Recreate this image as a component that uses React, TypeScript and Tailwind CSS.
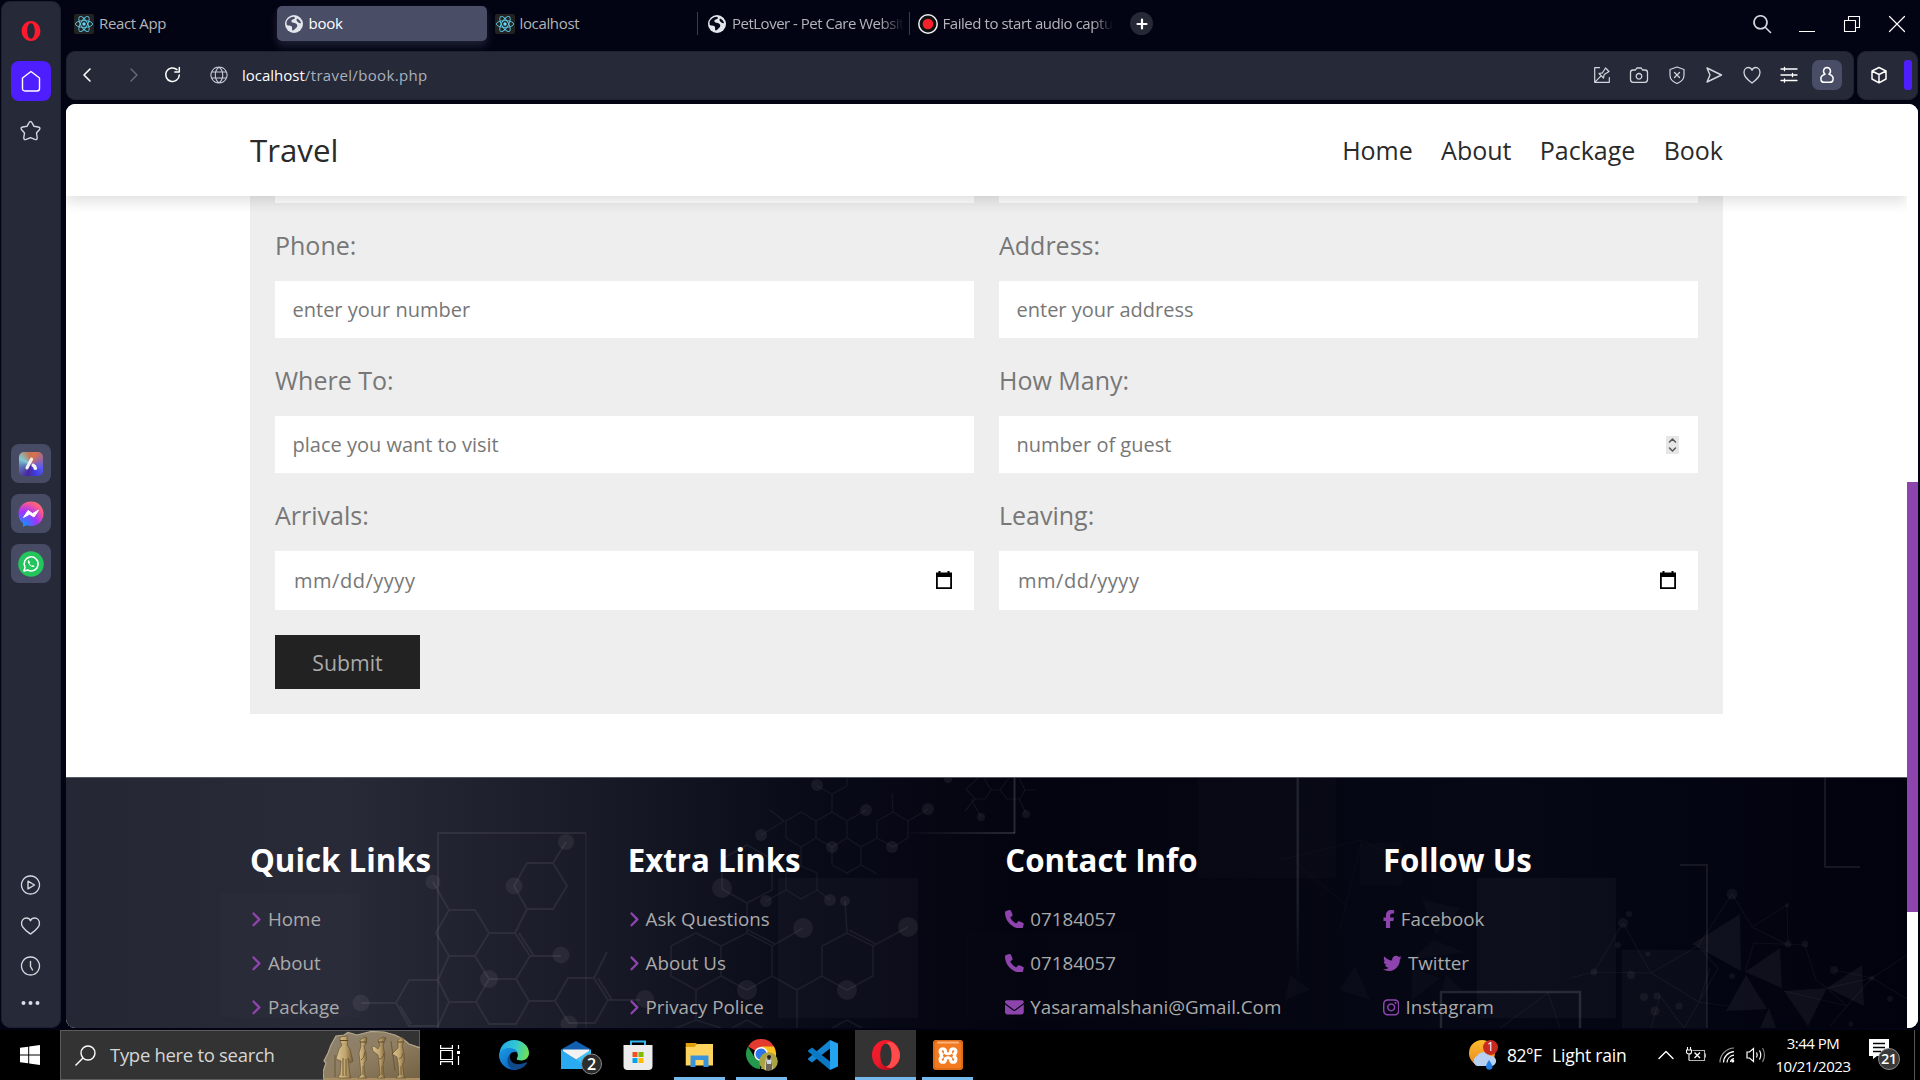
import React from "react";
import { FaAngleRight, FaPhone, FaEnvelope, FaFacebookF, FaTwitter, FaInstagram } from "react-icons/fa6";

const ui = "font-['Open_Sans','Noto_Sans',sans-serif]";

function ReactIcon() {
  return (
    <svg width="20" height="20" viewBox="0 0 20 20" className="shrink-0">
      <rect width="20" height="20" rx="2" fill="#222222" />
      <g fill="none" stroke="#5fc9e6" strokeWidth="0.9">
        <ellipse cx="10" cy="10" rx="8.6" ry="3.4" />
        <ellipse cx="10" cy="10" rx="8.6" ry="3.4" transform="rotate(60 10 10)" />
        <ellipse cx="10" cy="10" rx="8.6" ry="3.4" transform="rotate(120 10 10)" />
      </g>
      <circle cx="10" cy="10" r="1.7" fill="#61dafb" />
    </svg>
  );
}

function GlobeFav({ dark }: { dark: string }) {
  return (
    <svg width="18" height="18" viewBox="0 0 18 18" className="shrink-0">
      <circle cx="9" cy="9" r="9" fill="#e3e6ea" />
      <path d="M1.500 7C2.500 4 5 2 8.500 1.700C10 2 10.500 3.200 9 4C7 4.500 6 5.300 6.500 6.700C7.200 8 9.500 7.500 11.200 8.700C13 10 12.500 12 10.700 13.200C9.500 14.300 8.500 15.800 7.300 15.300C6.600 14 7.800 12.500 6.500 11.300C5 10.500 3 11 1.700 9.800Z" fill={dark} />
      <path d="M12 3.500C14 4.300 15.500 6 16 8C15 8.500 13.500 8 12.500 6.800C11.600 5.600 11 4.300 12 3.500Z" fill={dark} />
    </svg>
  );
}

function Stroke({ w, h, d, sw = 1.4, color = "#d4d6de" }: { w: number; h: number; d: string; sw?: number; color?: string }) {
  return (
    <svg width={w} height={h} viewBox={`0 0 ${w} ${h}`} fill="none" stroke={color} strokeWidth={sw} strokeLinejoin="round" strokeLinecap="round" className="shrink-0">
      <path d={d} />
    </svg>
  );
}

function OperaMark({ size, plain }: { size: number; plain?: boolean }) {
  return (
    <svg width={size} height={size} viewBox="0 0 30 30" className="shrink-0">
      <defs>
        <linearGradient id={plain ? "opA" : "opB"} x1="0" y1="0" x2={plain ? "0" : "1"} y2="1">
          <stop offset="0" stopColor="#ff1b2d" />
          <stop offset="0.5" stopColor={plain ? "#ff1b2d" : "#e81a2a"} />
          <stop offset="1" stopColor={plain ? "#ff1b2d" : "#a70014"} />
        </linearGradient>
      </defs>
      <path fillRule="evenodd" fill={plain ? "url(#opA)" : "url(#opB)"} d="M15 0C23 0 29 6.700 29 15S23 30 15 30S1 23.300 1 15S7 0 15 0ZM15 3.500C11.500 3.500 9.300 8.500 9.300 15S11.500 26.500 15 26.500S20.700 21.500 20.700 15S18.500 3.500 15 3.500Z" />
      {!plain && <path fill="#ff4b4b" d="M15 3.500C17 1.500 21 1.500 23.500 4C27 7 29 11 29 15C29 20 27 23.500 23.500 26.200C21 28.500 17 28.500 15 26.500C18.500 26.500 20.700 21.500 20.700 15S18.500 3.500 15 3.500Z" />}
    </svg>
  );
}

const HEART = "M9 17C5 14 1 11 1 6.500C1 3.500 3 1.500 5.200 1.500C7 1.500 8.400 2.700 9 4.300C9.600 2.700 11 1.500 12.800 1.500C15 1.500 17 3.500 17 6.500C17 11 13 14 9 17Z";

function Sidebar() {
  return (
    <aside className="flex w-[59.5px] ml-px mt-px h-[1027px] flex-col items-center rounded-[9px] bg-[#262938] border border-[#1d202e]">
      <div className="mt-[19px] h-5"><OperaMark size={20} plain /></div>
      <div className="mt-5 flex size-10 items-center justify-center rounded-lg bg-[#4f1eff]">
        <Stroke w={20} h={22} d="M10 1.500L18.500 8V18.500Q18.500 21 16 21H4Q1.500 21 1.500 18.500V8Z" color="#fff" />
      </div>
      <div className="mt-[19px] -translate-x-[0.500px]">
        <Stroke w={22} h={21} d="M11 1.500Q12 1.500 12.600 2.800L14.500 6.300L18.700 7Q21.500 7.700 19.800 9.800L17 13L17.700 17.500Q17.800 20.300 15.300 19.400L11 17.600L6.700 19.400Q4.200 20.300 4.300 17.500L5 13L2.200 9.800Q0.500 7.700 3.300 7L7.500 6.300L9.400 2.800Q10 1.500 11 1.500Z" />
      </div>
      <div className="mt-[303px] flex flex-col gap-[11px]">
        <div className="flex h-[39px] w-10 items-center justify-center rounded-lg bg-[#484b64]">
          <div className="flex size-6 items-center justify-center rounded-[5px] bg-[conic-gradient(from_20deg,#d9734a,#5a5bf0_90deg,#3e3fe0_130deg,#4a259c_180deg,#5f7fb8_240deg,#7fcad4_275deg,#c77350_330deg,#d9734a)]">
            <svg width="16" height="16" viewBox="0 0 16 16" fill="none" stroke="#f4f0f0" strokeWidth="3.200" strokeLinecap="round"><path d="M8.500 3.200L4 11.800" /><path d="M10.200 9.300Q12 10.300 12.300 12.200" strokeWidth="3.600" /></svg>
          </div>
        </div>
        <div className="flex h-[39px] w-10 items-center justify-center rounded-lg bg-[#484b64]">
          <svg width="26" height="26" viewBox="0 0 26 26">
            <defs><radialGradient id="msg" cx="0.2" cy="0.95" r="1.100"><stop offset="0" stopColor="#0a95ff" /><stop offset="0.5" stopColor="#a033ff" /><stop offset="0.85" stopColor="#ff5c87" /><stop offset="1" stopColor="#ff7061" /></radialGradient></defs>
            <path d="M13 0.500C20 0.500 25.500 5.800 25.500 12.700S20 25 13 25C11.500 25 10 24.800 8.800 24.300L5 25.800V22.300C2 20 0.500 16.700 0.500 12.700C0.500 5.800 6 0.500 13 0.500Z" fill="url(#msg)" />
            <path d="M5.500 16.500L10 9.500L14.500 12.500L20.500 9.200L16 16L11.500 13.200Z" fill="#fff" stroke="#fff" strokeLinejoin="round" />
          </svg>
        </div>
        <div className="flex h-[39px] w-10 items-center justify-center rounded-lg bg-[#484b64]">
          <svg width="26" height="26" viewBox="0 0 26 26">
            <circle cx="13" cy="13" r="12.800" fill="#25c55d" />
            <path d="M6 20L7 16.300A7 7 0 1 1 9.700 19Z" fill="none" stroke="#fff" strokeWidth="1.500" strokeLinejoin="round" />
            <path d="M10.300 9.300C9.300 10.500 10 12.500 11.700 14.200S15.700 16.700 16.600 15.300L14.900 14L13.900 14.800C12.800 14.300 11.800 13.300 11.400 12.300L12 11.400L11.200 9.400Z" fill="#fff" />
          </svg>
        </div>
      </div>
      <div className="mt-[292px] flex -translate-x-[0.500px] flex-col items-center">
        <Stroke w={20} h={20} d="M10 1A9 9 0 1 1 9.990 1M7.500 6.200L14 10L7.500 13.800Z" />
        <div className="mt-[22px]"><Stroke w={20} h={18} d="M10 17C6 14 1 11 1 6.500C1 3.500 3 1 5.800 1C8 1 9.400 2.200 10 3.800C10.600 2.200 12 1 14.200 1C17 1 19 3.500 19 6.500C19 11 14 14 10 17Z" /></div>
        <div className="mt-[21px]"><Stroke w={20} h={20} d="M10 1A9 9 0 1 1 9.990 1M10 5.500V10.500L12 14" /></div>
        <div className="mt-[24px]"><svg width="20" height="6" viewBox="0 0 20 6" fill="#dcdde4"><circle cx="3" cy="3" r="2" /><circle cx="10" cy="3" r="2" /><circle cx="17" cy="3" r="2" /></svg></div>
      </div>
    </aside>
  );
}

function TabBar() {
  return (
    <div className={`flex h-[50px] items-start text-[15px] leading-[22px] text-[#b4b5b9] ${ui}`}>
      <div className="ml-[8px] mt-[14px] flex h-5 w-[202.500px] items-center gap-[5px]">
        <ReactIcon /><span className="pb-[2px] tracking-[-0.350px]">React App</span>
      </div>
      <div className="mt-[6px] flex h-[35px] w-[210px] items-center gap-[6px] rounded-[5px] bg-[#4a4d66] pl-[8px] text-white shadow-[0_5px_8px_rgba(74,77,102,0.4)]">
        <GlobeFav dark="#4a4d66" /><span className="pb-px tracking-[-0.200px]">book</span>
      </div>
      <div className="ml-[8px] mt-[14px] flex h-5 w-[202.500px] items-center gap-[5px]">
        <ReactIcon /><span className="pb-[2px] tracking-[-0.350px]">localhost</span>
      </div>
      <div className="mt-3 flex h-[23px] w-[212px] items-center gap-[6px] border-l border-[#3a3d50] pl-[10px]">
        <GlobeFav dark="#05071a" />
        <span className="whitespace-nowrap pb-[2px] tracking-[-0.500px] [mask-image:linear-gradient(to_right,#000_86%,transparent)]">PetLover - Pet Care Websit</span>
      </div>
      <div className="mt-3 flex h-[23px] w-[221px] items-center gap-[5px] border-l border-[#3a3d50] pl-[7.500px]">
        <svg width="20" height="20" viewBox="0 0 20 20" className="shrink-0"><circle cx="10" cy="10" r="9.200" fill="#111" stroke="#eee" strokeWidth="1.500" /><circle cx="10" cy="10" r="5.300" fill="#f5222d" /></svg>
        <span className="whitespace-nowrap pb-[2px] tracking-[-0.450px] [mask-image:linear-gradient(to_right,#000_88%,transparent)]">Failed to start audio captu</span>
      </div>
      <div className="mt-3 flex size-[23px] items-center justify-center rounded-full bg-[#252835]">
        <Stroke w={12} h={12} d="M6 1.500V10.500M1.500 6H10.500" sw={2.2} color="#fff" />
      </div>
      <div className="ml-auto mt-3 mr-[14px] flex h-6 items-center">
        <Stroke w={20} h={20} d="M8.500 1.800A6.500 6.500 0 1 1 8.490 1.800M13 13L18.500 18.500" sw={1.6} />
        <div className="ml-[27px] mt-[15px] h-px w-4 bg-white" />
        <div className="ml-[28px]"><Stroke w={18} h={18} d="M1.500 5.500H12.500V16.500H1.500ZM5.500 5.500V1.500H16.500V12.500H12.500" sw={1.1} color="#fff" /></div>
        <div className="ml-[27px]"><Stroke w={18} h={18} d="M1.500 1.500L16.500 16.500M16.500 1.500L1.500 16.500" sw={1.2} color="#fff" /></div>
      </div>
    </div>
  );
}

function Toolbar() {
  return (
    <div className={`flex h-[49px] mt-px gap-[3px] ${ui}`}>
      <div className="flex w-[1787.500px] items-center rounded-[9px] border border-[#1f2230] bg-[#262938] pb-[2px] pl-[15px]">
        <Stroke w={10} h={16} d="M8 2L2 8L8 14" sw={1.6} color="#fff" />
        <div className="ml-[37px]"><Stroke w={10} h={16} d="M2 2L8 8L2 14" sw={1.4} color="#6a6d7c" /></div>
        <div className="ml-[25px]"><Stroke w={17} h={17} d="M15.300 9A6.800 6.800 0 1 1 13 3.600M15.300 1.500V6H10.800" sw={1.5} color="#fff" /></div>
        <div className="ml-[29px]"><Stroke w={18} h={18} d="M9 1A8 8 0 1 1 8.990 1M9 1C4 5 4 13 9 17M9 1C14 5 14 13 9 17M2 6H16M2 12H16" sw={1.1} color="#c9ccd6" /></div>
        <span className="ml-[14px] whitespace-nowrap text-[15px] leading-6 tracking-[0.350px] text-[#a9b1bf]"><span className="tracking-[0] text-white">localhost</span>/travel/book.php</span>
        <div className="ml-auto flex items-center pr-[11px]">
          <Stroke w={18} h={18} d="M6.500 1.700H1.700V16.300H16.300V11.500M1.700 16.300L7.800 10.200M6 7.500L10.500 12M6 7.500L9.500 6.800L12.500 2L16 5.500L11.200 8.500L10.500 12" sw={1.2} />
          <div className="ml-[18px]"><Stroke w={20} h={18} d="M6.500 4L7.800 2H12.200L13.500 4H16Q18.500 4 18.500 6.500V13.500Q18.500 16.300 16 16.300H4Q1.500 16.300 1.500 13.500V6.500Q1.500 4 4 4ZM10 7.500A2.800 2.800 0 1 1 9.990 7.500" sw={1.3} /></div>
          <div className="ml-[19px]"><Stroke w={18} h={18} d="M9 1L16 3.500V9C16 13 13 16 9 17.500C5 16 2 13 2 9V3.500ZM6.500 6.500L11.500 11.500M11.500 6.500L6.500 11.500" sw={1.2} /></div>
          <div className="ml-[19px]"><Stroke w={18} h={18} d="M2 2L16.500 9L2 16L5 9Z" sw={1.4} /></div>
          <div className="ml-[20px]"><Stroke w={18} h={18} d={HEART} sw={1.3} /></div>
          <div className="ml-[19px]"><Stroke w={18} h={18} d="M1 3H17M1 9H17M1 14.500H17M4.500 1.300V4.700M12.500 7.300V10.700M4.500 12.800V16.200" sw={1.3} color="#fff" /></div>
          <div className="ml-[14px] flex size-[30px] items-center justify-center rounded-[7px] bg-[#4a4d66]">
            <Stroke w={16} h={18} d="M8 1.500A3.500 3.700 0 0 1 10 8.200C13 9 14.500 11.500 14 14Q13.500 16.300 11 16.300H5Q2.500 16.300 2 14C1.500 11.500 3 9 6 8.200A3.500 3.700 0 0 1 8 1.500Z" sw={1.5} color="#fff" />
          </div>
        </div>
      </div>
      <div className="flex w-[61px] items-center rounded-[9px] border border-[#1f2230] bg-[#262938] pb-[2px] pl-[12px]">
        <Stroke w={18} h={18} d="M9 1.500L16 5V13L9 16.800L2 13V5ZM2 5L9 8.500L16 5M9 8.500V16.800" sw={1.5} color="#fff" />
        <div className="ml-[16px] h-[30px] w-[8px] rounded-[3px] bg-[#4f1eff]" />
      </div>
    </div>
  );
}

function Field({ label, text, kind }: { label: string; text: string; kind?: string }) {
  return (
    <div className="flex flex-col">
      <div className="flex h-[78px] items-center pt-[6px] text-[25px] leading-[34px] text-[#777]">{label}</div>
      <div className={`flex items-center justify-between bg-white text-[20px] text-[#777] ${kind === "date" ? "h-[59px] pl-[19px] pr-[22px]" : "h-[57px] pl-[17.500px] pr-[19px]"}`}>
        <span className={kind === "date" ? "leading-7 tracking-[0.520px]" : "leading-7"}>{text}</span>
        {kind === "number" && (
          <span className="flex h-[18px] w-[13px] items-center justify-center bg-[#e6e6e6]">
            <Stroke w={9} h={16} d="M1.500 5L4.500 2L7.500 5M1.500 11L4.500 14L7.500 11" sw={1.5} color="#555" />
          </span>
        )}
        {kind === "date" && (
          <svg width="16" height="18" viewBox="0 0 16 18" className="-translate-y-px"><path fillRule="evenodd" d="M0 1.500H2.500V0H4.500V1.500H11.500V0H13.500V1.500H16V18H0ZM1.800 6V16.300H14.200V6Z" fill="#000" /></svg>
        )}
      </div>
    </div>
  );
}

const fields = [
  ["Phone:", "enter your number", ""],
  ["Address:", "enter your address", ""],
  ["Where To:", "place you want to visit", ""],
  ["How Many:", "number of guest", "number"],
  ["Arrivals:", "mm/dd/yyyy", "date"],
  ["Leaving:", "mm/dd/yyyy", "date"],
];

const footerCols = [
  { title: "Quick Links", items: [["angle", "Home"], ["angle", "About"], ["angle", "Package"]] },
  { title: "Extra Links", items: [["angle", "Ask Questions"], ["angle", "About Us"], ["angle", "Privacy Police"]] },
  { title: "Contact Info", items: [["phone", "07184057"], ["phone", "07184057"], ["mail", "Yasaramalshani@Gmail.Com"]] },
  { title: "Follow Us", items: [["fb", "Facebook"], ["tw", "Twitter"], ["ig", "Instagram"]] },
];

function LinkIcon({ kind }: { kind: string }) {
  if (kind === "phone") return <FaPhone className="h-[18.750px] w-[18.750px]" />;
  if (kind === "mail") return <FaEnvelope className="h-[18.750px] w-[18.750px]" />;
  if (kind === "fb") return <FaFacebookF className="h-[18.750px] w-[11.700px]" />;
  if (kind === "tw") return <FaTwitter className="h-[18.750px] w-[18.750px]" />;
  if (kind === "ig") return <FaInstagram className="h-[18.750px] w-[16.400px]" />;
  return <FaAngleRight className="h-[18.750px] w-[11.700px]" />;
}

/* Decorative molecule and mesh artwork; drawn in window coordinates. */
function FooterArt() {
  return (
    <svg className="absolute inset-0 size-full" viewBox="66 777 1841 251" preserveAspectRatio="none">
      <defs>
        <linearGradient id="fbg" x1="0" y1="0" x2="1" y2="0">
          <stop offset="0" stopColor="#262735" />
          <stop offset="0.15" stopColor="#292a38" />
          <stop offset="0.28" stopColor="#1a1b28" />
          <stop offset="0.4" stopColor="#0a0b19" />
          <stop offset="0.52" stopColor="#03040f" />
          <stop offset="0.78" stopColor="#060815" />
          <stop offset="1" stopColor="#01020e" />
        </linearGradient>
        <linearGradient id="fadeL" x1="0" x2="1"><stop offset="0" stopColor="#fff" stopOpacity="0" /><stop offset="1" stopColor="#fff" stopOpacity="0.14" /></linearGradient>
        <linearGradient id="fadeD" x1="0" x2="0" y1="0" y2="1"><stop offset="0" stopColor="#fff" stopOpacity="0.1" /><stop offset="0.6" stopColor="#fff" stopOpacity="0.09" /><stop offset="1" stopColor="#fff" stopOpacity="0" /></linearGradient>
      </defs>
      <rect x="66" y="777" width="1841" height="251" fill="url(#fbg)" />
      <g fill="#fff" fillOpacity="0.015">
        <rect x="220" y="893" width="140" height="124" fillOpacity="0.01" />
        <rect x="778" y="878" width="140" height="140" fillOpacity="0.027" />
        <rect x="1477" y="878" width="139" height="140" fillOpacity="0.033" />
        <rect x="1622" y="950" width="85" height="78" fillOpacity="0.033" />
        <rect x="1360" y="843" width="42" height="42" />
        <rect x="1198" y="778" width="138" height="100" />
        <rect x="966" y="933" width="170" height="85" fillOpacity="0.008" />
      </g>
      <g fill="none" stroke="#fff" strokeOpacity="0.065" strokeWidth="2">
        <path d="M438 1028V833H586" strokeOpacity="0.07" />
        <path d="M586 833V1028" strokeOpacity="0.04" />
        <path d="M527 863H553L567 886L553 909H527L514 886ZM553 863L566 842M449 910H475L489 933L475 956H449L436 933ZM449 910L433 882M489 933H515L530 956L516 979H489L475 956M515 933L527 909M530 956H561M409 980H438L449 1002L438 1026H409L396 1003ZM396 1003H361M438 980L449 956M449 1002H476L489 979M476 1002L489 1024H516L529 1001L516 979M529 1001H555L568 978H594L608 1000L595 1023H569L555 1001M608 1000H640M594 978L607 952M519 933L534 956M400 1006L411 1024M598 978L612 1000" />
      </g>
      <g fill="none" stroke="#fff" strokeOpacity="0.06" strokeWidth="1.600">
        <path d="M747 933L772 946V976L747 990L721 976V946ZM721 946L696 933L671 946V976L696 990L721 976M847 933L873 946V976L847 990L822 976V946ZM772 976L797 990L822 976M797 990V1028M696 990V1020L671 1030M696 1020L721 1028M747 1020L732 1028M747 1020L762 1028M847 1020L832 1028M847 1020L862 1028M873 946L908 927M847 933L845 901M772 946L803 928M747 845L772 859V890L747 903L722 889V859ZM747 903V933M748 930L775 944M849 930L876 944" />
        <path strokeWidth="1.200" d="M801 812L816 821V838L801 847L786 838V821ZM816 821L832 812L847 821V838L832 847L816 838M893 812L908 821V838L893 847L877 838V821ZM847 821L866 810M908 821L928 809M893 812L892 793M761 835L784 821L770 810M832 812V794L817 786M832 794L847 786V778M801 847V866L786 873V890L801 899L817 890V873L801 866M832 847V865L847 873L861 865V847L877 838M861 847L847 838M861 865L877 874M786 890L766 901M817 890L830 900M978 778L966 789L975 799H985L991 790L984 778M991 790H1000L1009 778M1000 790L1007 799H1020L1025 790L1019 778M975 799L965 811M971 799L981 817M1019 799L1026 813M1025 790H1037" />
      </g>
      <g fill="#fff" fillOpacity="0.062">
        {[[566, 842, 8], [514, 886, 8.5], [433, 882, 7.500], [561, 955, 8.500], [489, 979, 9], [361, 1003, 8.500], [569, 1024, 8.500], [645, 999, 9], [722, 888, 10], [803, 928, 10], [908, 927, 10], [747, 990, 10], [847, 990, 10], [845, 901, 5], [766, 901, 6], [830, 900, 6], [866, 810, 6], [928, 809, 6], [832, 847, 6], [892, 847, 6], [761, 835, 6], [817, 785, 6], [981, 817, 4], [1026, 814, 4], [948, 779, 4]].map(([x, y, r]) => <circle key={`${x}-${y}`} cx={x} cy={y} r={r} />)}
      </g>
      <path d="M1014.500 778V833" stroke="#fff" strokeOpacity="0.14" strokeWidth="2" />
      <rect x="900" y="832" width="115" height="2" fill="url(#fadeL)" />
      <rect x="1296.500" y="778" width="2.500" height="205" fill="url(#fadeD)" />
      <g fill="none" stroke="#fff" strokeOpacity="0.09" strokeWidth="1.500">
        <path d="M1825 778V867H1860" strokeOpacity="0.11" />
        <path d="M1680 865H1707V1028" strokeWidth="2" strokeOpacity="0.075" />
        <path d="M1441 1028V992H1580V1028" strokeOpacity="0.12" strokeWidth="2.500" />
        <path strokeWidth="1.200" strokeOpacity="0.045" d="M1623 923L1594 972L1651 973L1623 923M1594 972L1570 978M1651 973L1698 946L1732 894L1752 927L1787 905L1788 945L1752 927M1651 973L1699 1002L1684 1028M1699 1002L1728 1006M1698 946L1718 968L1699 1002L1710 968M1745 972L1754 943L1805 945M1805 945L1816 980L1827 988L1872 978L1907 955M1834 970L1872 978L1907 999M1827 988L1847 1006L1872 978M1784 991L1847 1006L1830 1026M1651 1028L1660 996L1684 1028M1500 1028L1548 993L1560 1028" />
        <path strokeWidth="1" strokeOpacity="0.025" d="M1280 860L1362 840L1346 905L1310 875L1295 860M1362 840L1436 878M1346 905L1340 930" />
      </g>
      <g fill="#fff" fillOpacity="0.05">
        <path d="M1740 914L1741 971L1692 944ZM1780 948L1782 988L1745 972ZM1862 965L1864 1006L1827 988ZM1746 975L1767 1009L1726 1011ZM1784 991L1827 988L1808 1026ZM1760 1028L1769 1008L1776 1028Z" />
        <path fillOpacity="0.022" d="M1422 900L1461 908L1436 934ZM1434 940L1464 952L1410 960ZM1355 966L1370 1000L1340 990ZM1412 968L1440 978L1412 1000ZM1290 975L1310 990L1285 1000ZM1446 975L1462 990H1442Z" />
        {[[1732, 894, 5.5], [1623, 923, 5], [1629, 914, 3], [1594, 972, 3.5], [1618, 945, 3], [1631, 975, 4], [1787, 905, 2], [1788, 944, 3.5], [1805, 944, 3.500], [1834, 970, 4], [1872, 978, 2.500], [1644, 997, 4], [1657, 996, 3.500], [1655, 1011, 4.500], [1679, 1006, 3.500], [1890, 999, 3], [1851, 1024, 2.500], [1648, 954, 2.500], [1732, 976, 3]].map(([x, y, r]) => <circle key={`${x}-${y}`} cx={x} cy={y} r={r} />)}
      </g>
      <rect x="66" y="777" width="1841" height="1" fill="#565966" />
    </svg>
  );
}

function WebPage() {
  return (
    <div className={`flex h-[924px] w-[1852px] overflow-hidden rounded-[9px] bg-white mt-1 ${ui}`}>
      <div className="flex w-[1841px] flex-col overflow-hidden">
        <header className="relative z-10 flex h-[92px] shrink-0 items-center justify-between bg-white px-[184px] text-[#2a2a2a] shadow-[0_6px_13px_rgba(0,0,0,0.12)]">
          <span className="text-[31.250px] leading-10">Travel</span>
          <nav className="flex gap-[28.300px] text-[25px] leading-8"><span>Home</span><span>About</span><span>Package</span><span>Book</span></nav>
        </header>
        <main className="mx-[184px] h-[518px] shrink-0 bg-[#eee] px-[25px]">
          <div className="grid grid-cols-2 gap-x-[25px]">
            <div className="h-[7px] bg-white" /><div className="h-[7px] bg-white" />
            {fields.map(([l, t, k]) => <Field key={l} label={l} text={t} kind={k} />)}
          </div>
          <div className="mt-[25px] flex h-[54px] w-[145px] items-center justify-center bg-[#222] pt-[2px] text-[21.250px] text-[#aaa]">Submit</div>
        </main>
        <footer className="relative mt-[63px] h-[251px] shrink-0">
          <FooterArt />
          <div className="relative grid grid-cols-4 gap-x-[37.500px] px-[184px] pt-[62px]">
            {footerCols.map((c) => (
              <div key={c.title}>
                <h3 className="text-[31.250px] font-bold leading-[43px] text-white">{c.title}</h3>
                <div className="mt-[15px] flex flex-col">
                  {c.items.map(([k, t], i) => (
                    <div key={i} className="flex h-[44px] items-center gap-[6.250px] text-[18.750px] leading-6 text-[#aaa]">
                      <span className="text-[#8e44ad]"><LinkIcon kind={k} /></span><span>{t}</span>
                    </div>
                  ))}
                </div>
              </div>
            ))}
          </div>
        </footer>
      </div>
      <div className="w-[11px] bg-white pt-[378px]"><div className="h-[430px] bg-[#8e44ad]" /></div>
    </div>
  );
}

function Relief() {
  return (
    <svg width="97" height="49" viewBox="0 0 97 49" className="shrink-0">
      <defs>
        <linearGradient id="rock" x1="0" y1="0" x2="1" y2="1"><stop offset="0" stopColor="#8d8371" /><stop offset="0.5" stopColor="#8f7e62" /><stop offset="1" stopColor="#746143" /></linearGradient>
        <linearGradient id="fig" x1="0" x2="1"><stop offset="0" stopColor="#dcc592" /><stop offset="0.55" stopColor="#bfa46f" /><stop offset="1" stopColor="#735a35" /></linearGradient>
      </defs>
      <path d="M1 49L0 41L3 32L1 30L5 22L8 14L13 5L21 4L25 1.500L34 4L48 0.500L61 1L72 4L80 8L86 13L97 16V49Z" fill="url(#rock)" />
      <path d="M1 49L0 41L3 32L1 30L5 22L8 14L13 5L21 4L25 1.500L34 4L48 0.500L61 1L72 4L80 8L86 13L97 17" fill="none" stroke="#b5a98d" strokeWidth="1.200" />
      <path d="M2 47H97V49H2Z" fill="#a98f63" />
      <g fill="url(#fig)" stroke="#5f4b2b" strokeWidth="0.600">
        <path d="M17 6L24 5V8L25 10L24 14L27 18L30 30L27 32L25 27L27 44L28 47H16L15 45L17 44L18 30L13 28L16 18L19 14L17 10Z" />
        <path d="M37 9L42 6L44 7L43 13L41 15L43 22L43.500 29L41 32L42 45L44 47H35L38 44L37 32L36 22L38 15Z" />
        <path d="M55 9L60 6L63 7L61 12L60 15L62 24L61 30L60 33L61 45L62 47H54L57 44L56 32L55 24L50 20L49 16L51 15L55 18L57 14Z" />
        <path d="M75 9L79 6L81 10L79 15L81 22L81.500 30L79.500 33L81 45L83 47H73L76 44L75 32L74 26L69 23L75 17Z" />
      </g>
      <path d="M12 24V46M68 10L72 40M38 29Q41 28 42 21M56 28Q60 28 61 22M76 28Q79 28 80 22M20 27V45M23 28V45M40 35V44M59 35V44M78 35V44" stroke="#6a5431" strokeWidth="0.900" fill="none" />
      <path d="M17 9.500H25M37 11H43M55 11H61M75 11H80" stroke="#5b4725" strokeWidth="1.200" />
    </svg>
  );
}

function TaskApp({ children, w, gap, line, active }: { children: React.ReactNode; w: number; gap: number; line?: boolean; active?: boolean }) {
  return (
    <div className={`relative flex h-[50px] shrink-0 items-center justify-center ${active ? "bg-[#333333]" : ""} ${line ? "border-b-[3px] border-[#76b9ed] pt-[3px]" : ""}`} style={{ width: w, marginLeft: gap }}>
      {children}
    </div>
  );
}

function Taskbar() {
  return (
    <div className={`mt-[2px] flex h-[50px] bg-black text-white ${ui}`}>
      <div className="flex w-[60px] items-center justify-center">
        <svg width="20" height="20" viewBox="0 0 20 20" fill="#fff"><path d="M0 2.800L8.200 1.700V9.500H0ZM9.200 1.500L20 0V9.500H9.200ZM0 10.500H8.200V18.300L0 17.200ZM9.200 10.500H20V20L9.200 18.500Z" /></svg>
      </div>
      <div className="flex w-[360px] items-center border border-[#5c5c5c] bg-[#333333] pl-[14px]">
        <svg width="21" height="21" viewBox="0 0 21 21" fill="none" stroke="#fff" strokeWidth="1.400"><circle cx="13" cy="8" r="7" /><path d="M8 13L0.500 20.500" /></svg>
        <span className="ml-[14px] w-[180px] whitespace-nowrap text-[18.500px] leading-7 tracking-[-0.300px] text-[#d6d6d6]">Type here to search</span>
        <div className="ml-auto -mr-px h-[49px]"><Relief /></div>
      </div>
      <TaskApp w={20} gap={20}>
        <svg width="20" height="20" viewBox="0 0 20 20" fill="none" stroke="#fff" strokeWidth="1.200"><path d="M0.600 0V3.400H12.400V0M0.600 20V16.600H12.400V20M0.600 5.500H12.400V14.500H0.600ZM18.500 0V4M18.500 11V20" /><rect x="17" y="6" width="3" height="3" fill="#fff" stroke="none" /></svg>
      </TaskApp>
      <TaskApp w={30} gap={39}>
        <svg width="30" height="30" viewBox="0 0 30 30">
          <defs>
            <linearGradient id="eg1" x1="0" y1="0.300" x2="1" y2="0.500"><stop offset="0" stopColor="#26a9e8" /><stop offset="0.500" stopColor="#2fc6d6" /><stop offset="1" stopColor="#6ee356" /></linearGradient>
            <linearGradient id="eg2" x1="0" y1="0" x2="0.700" y2="1"><stop offset="0" stopColor="#1b9de2" /><stop offset="1" stopColor="#0a63c4" /></linearGradient>
          </defs>
          <path d="M0.500 13C1.500 5 7.500 0 15 0C23.500 0 30 6 30 13C30 18 26 20.500 22 20.500C18.500 20.500 17 19.500 18 18C20 15.500 18.500 9 12 9C6 9 1.500 12 0.500 15Z" fill="url(#eg1)" />
          <path d="M0 15C1 10 6 7.500 11 8C16 8.500 18.500 11 19 13.500C17 11.500 13 11.500 11 14.500C8 19 12 26 19 29.500C9 32 0 24 0 15Z" fill="url(#eg2)" />
          <path d="M11 14.500C9.500 22 16 27 26.500 22.500C28 22 28.300 23 27.500 24C23 30 15 31 11 27.500C7.500 24 7.500 17.500 11 14.500Z" fill="#114a8b" />
        </svg>
      </TaskApp>
      <TaskApp w={42} gap={32}>
        <div className="relative h-[30px] w-[42px]">
          <svg width="42" height="36" viewBox="0 0 42 36">
            <path d="M0 9.500L15 1L30 9.500V17H0Z" fill="#1160b0" />
            <path d="M0 9.500L15 19.500L30 9.500V29H0Z" fill="#2aaaf0" />
            <path d="M15 19.500L30 9.500V29Z" fill="#35c4fb" /><path d="M2 11L15 19.500L28 11V9.500H2Z" fill="#f2f2f2" />
            <circle cx="30.500" cy="24" r="10" fill="#2d2d2d" stroke="#8a8a8a" />
          </svg>
          <span className="absolute left-[26px] top-[14px] text-[16px] font-semibold leading-5">2</span>
        </div>
      </TaskApp>
      <TaskApp w={30} gap={20}>
        <svg width="30" height="30" viewBox="0 0 30 30"><path d="M8 6V1.500H22V6" fill="none" stroke="#35b8f1" strokeWidth="2" /><path d="M0.500 5H29.500V26Q29.500 30 25.500 30H4.500Q0.500 30 0.500 26Z" fill="#ececec" /><rect x="9.500" y="12" width="5" height="5" fill="#f25022" /><rect x="15.500" y="12" width="5" height="5" fill="#7fba00" /><rect x="9.500" y="18" width="5" height="5" fill="#00a4ef" /><rect x="15.500" y="18" width="5" height="5" fill="#ffb900" /></svg>
      </TaskApp>
      <TaskApp w={51} gap={21} line>
        <svg width="28" height="24" viewBox="0 0 28 24" className="-translate-x-[0.500px]"><path d="M0 0H10.500L13 3H11L9 5H0Z" fill="#e0a00c" /><path d="M0 4H9L11.500 1H27.500V22.500H0Z" fill="#ffd45e" /><path d="M5 24V12.500H23V24H18V17H10V24Z" fill="#3a94dd" /></svg>
      </TaskApp>
      <TaskApp w={51} gap={11} line>
        <svg width="32" height="32" viewBox="0 0 32 32">
          <path d="M15 15L2 7.500A15 15 0 0 1 28 7.500Z" fill="#e33b2e" />
          <path d="M28 7.500H15V15L21 19L15 30A15 15 0 0 0 28 7.500Z" fill="#fcc31e" />
          <path d="M2 7.500L9 19L15 22L14 30A15 15 0 0 1 2 7.500Z" fill="#239a4b" />
          <circle cx="15" cy="15" r="7" fill="#fff" /><circle cx="15" cy="15" r="5.500" fill="#2c76ea" />
          <circle cx="22.500" cy="22.500" r="9.300" fill="#a9a343" /><path d="M19 31C18 25 20 18 22.500 15.500C25.500 18 26 25 27 30Z" fill="#d8c9b4" /><path d="M20 24L23 16L26 25V31H20Z" fill="#6d6658" /><circle cx="23" cy="18" r="2" fill="#262122" /><path d="M21 21H25V25H21Z" fill="#c9d8e4" />
        </svg>
      </TaskApp>
      <TaskApp w={30} gap={21}>
        <svg width="30" height="30" viewBox="0 0 30 30"><path d="M22 0L30 3.500V26.500L22 30V22L22 8Z" fill="#24a3ee" /><path d="M22 0V8.500L4 22.500L0 19.500V18.500Z" fill="#1583cf" /><path d="M22 30V21.500L4 7.500L0 10.500V11.500Z" fill="#0a78c2" /></svg>
      </TaskApp>
      <TaskApp w={61} gap={17} line active><OperaMark size={30} /></TaskApp>
      <TaskApp w={51} gap={6} line>
        <svg width="30" height="30" viewBox="0 0 30 30"><rect width="30" height="30" rx="3" fill="#f47a20" /><rect x="1" y="1" width="28" height="28" rx="2.500" fill="none" stroke="#c65c10" /><rect x="4" y="1.500" width="22" height="2" rx="1" fill="#ffb27a" /><path d="M12.500 12.500V10.500A2.700 2.700 0 1 0 9 13.500Q7.500 15 9 16.500A2.700 2.700 0 1 0 12.500 19.500V18Q15 16.500 17.500 18V19.500A2.700 2.700 0 1 0 21 16.500Q22.500 15 21 13.500A2.700 2.700 0 1 0 17.500 10.500V12.500Q15 14 12.500 12.500Z" fill="none" stroke="#fff" strokeWidth="3.200" strokeLinejoin="round" transform="translate(0 0.500)" /></svg>
      </TaskApp>
      <div className="ml-auto flex items-center">
        <div className="relative mr-[9px] h-[30px] w-[29px]">
          <svg width="29" height="30" viewBox="0 0 29 30">
            <defs><linearGradient id="sun" x1="0" y1="0" x2="0" y2="1"><stop offset="0" stopColor="#fbbd2e" /><stop offset="1" stopColor="#ee8720" /></linearGradient></defs>
            <circle cx="13" cy="13" r="13" fill="url(#sun)" />
            <path d="M8 26A5.500 5.500 0 0 1 8 16A7.500 7.500 0 0 1 21 16A5 5 0 0 1 23 26Z" fill="#b9d0f5" />
            <path d="M20 20C22 23 23.500 25 23.500 27A3.300 3.300 0 0 1 17 27C17 25 18 23 20 20Z" fill="#1f7fe6" />
            <circle cx="21.500" cy="7.500" r="7.500" fill="#c82a20" />
          </svg>
          <span className="absolute left-[18px] top-[-1px] text-[12px] leading-4">1</span>
        </div>
        <span className="w-[45px] whitespace-nowrap text-[17.500px] tracking-[-0.500px]">82°F</span>
        <span className="w-[106px] whitespace-nowrap text-[17.500px] tracking-[-0.200px]">Light rain</span>
        <Stroke w={16} h={10} d="M1 8.500L8 1.500L15 8.500" sw={1.4} color="#fff" />
        <div className="ml-[12px]"><svg width="20" height="16" viewBox="0 0 20 16" fill="none" stroke="#fff" strokeWidth="1.100"><path d="M1.500 0V3M4.500 0V3M0.500 3H5.500V5Q5.500 7 3 7Q0.500 7 0.500 5ZM3 7V13.500" /><path d="M6.500 3.500H18.500V13.500H3M19.500 6.500V10.500" strokeOpacity="0.700" /><path d="M8.500 5.500L14 11M14 5.500L8.500 11" strokeWidth="1.300" /></svg></div>
        <div className="ml-[13px]"><svg width="16" height="16" viewBox="0 0 16 16" fill="none" stroke="#fff" strokeWidth="1.200"><path d="M1 15.500A14.500 14.500 0 0 1 15 1" strokeOpacity="0.600" /><path d="M4.500 15.500A11 11 0 0 1 15 4.700M8 15.500A8 8 0 0 1 15 8.200M11.500 15A4 4 0 0 1 15 11.700" /><circle cx="13.800" cy="14" r="1.500" fill="#fff" stroke="none" /></svg></div>
        <div className="ml-[11px]"><svg width="21" height="18" viewBox="0 0 21 18" fill="none" stroke="#fff" strokeWidth="1.200"><path d="M1 6H3.500L7.500 2.500V15.500L3.500 12H1ZM10.500 6.500Q12 9 10.500 11.500M13.500 4.500Q16 9 13.500 13.500" /><path d="M16.500 2Q20.500 9 16.500 16" strokeOpacity="0.500" /></svg></div>
        <div className="ml-[7px] flex w-[78px] flex-col items-center whitespace-nowrap text-[15px] leading-[23px]"><span className="tracking-[-0.500px]">3:44 PM</span><span className="tracking-[-0.450px]">10/21/2023</span></div>
        <div className="relative ml-[17px] h-[32px] w-[34px]">
          <svg width="34" height="34" viewBox="0 0 34 34"><path d="M0 0H20V17H8L4 20V17H0Z" fill="#fff" /><path d="M4 4.500H16M4 8.500H16M4 12.500H12" stroke="#000" strokeWidth="1.300" /><circle cx="20" cy="20" r="10.500" fill="#3a3a3a" stroke="#8a8a8a" /></svg>
          <span className="absolute left-[12px] top-[10px] text-[14.500px] font-semibold leading-5 tracking-[-0.500px]">21</span>
        </div>
        <div className="ml-[11px] mr-[5px] h-[50px] w-px bg-[#555]" />
      </div>
    </div>
  );
}

export default function App() {
  return (
    <div className="flex h-[1080px] w-[1920px] flex-col overflow-hidden bg-[#020413]">
      <div className="flex h-[1028px] shrink-0">
        <Sidebar />
        <div className="ml-[5.500px] flex w-[1854px] flex-col">
          <TabBar />
          <Toolbar />
          <WebPage />
        </div>
      </div>
      <Taskbar />
    </div>
  );
}
